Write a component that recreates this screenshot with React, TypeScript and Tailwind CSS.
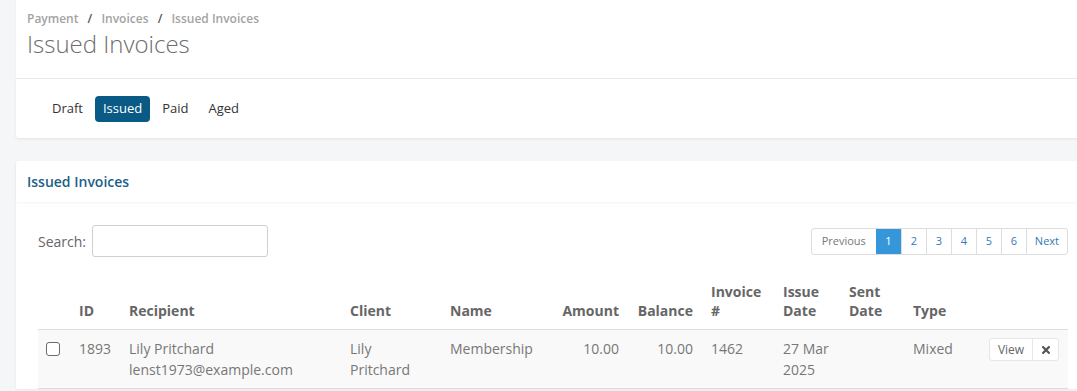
import React from "react";

export default function App() {
  const font = { fontFamily: '"Open Sans", "Noto Sans", sans-serif' };
  return (
    <div className="w-[1077px] h-[391px] overflow-hidden bg-[#f5f6f8]" style={font}>
      <div className="ml-4 w-[1074px]">
        {/* header */}
        <div className="bg-white pl-[11px] pt-[10px] h-[78px] shadow-[0_1px_2px_rgba(0,0,0,0.06)]">
          <div className="text-[12px] leading-[18px] font-semibold text-[#a3a3a3]">
            Payment <span className="mx-[6px] text-[#555]">/</span> Invoices <span className="mx-[6px] text-[#555]">/</span> Issued Invoices
          </div>
          <h1 className="text-[24px] leading-[32px] font-light text-[#6d6d6d]">Issued Invoices</h1>
        </div>
        {/* tabs */}
        <div className="bg-white h-[59px] mt-[1px] rounded-b-[3px] shadow-[0_1px_3px_rgba(0,0,0,0.08)] flex items-center pl-[28px] gap-[4px] text-[13px]">
          <span className="px-[8px] py-[4px] text-[#333]">Draft</span>
          <span className="px-[8px] h-[26px] flex items-center rounded-[4px] bg-[#095a85] text-white">Issued</span>
          <span className="px-[8px] py-[4px] text-[#333]">Paid</span>
          <span className="px-[8px] py-[4px] text-[#333]">Aged</span>
        </div>
        {/* card */}
        <div className="mt-[23px] bg-white rounded-t-[3px] shadow-[0_1px_3px_rgba(0,0,0,0.06)]">
          <div className="h-[41px] pl-[11px] flex items-center text-[14px] font-semibold text-[#1b5f88] shadow-[0_1px_2px_rgba(0,0,0,0.05)]">
            Issued Invoices
          </div>
          <div className="px-[22px] pt-[23px]">
            <div className="flex items-center justify-between h-[32px]">
              <label className="flex items-center text-[14px] text-[#666]">
                Search:
                <input className="ml-[6px] w-[176px] h-[32px] border border-[#cfcfcf] rounded-[3px] bg-white" />
              </label>
              <div className="flex h-[27px] text-[11px] border border-[#ddd] rounded-[3px] overflow-hidden">
                <span className="px-[10px] flex items-center text-[#777]">Previous</span>
                <span className="w-[25px] flex items-center justify-center bg-[#3597d9] text-white">1</span>
                {["2", "3", "4", "5", "6"].map((n) => (
                  <span key={n} className="w-[25px] flex items-center justify-center border-l border-[#ddd] text-[#337ab7]">{n}</span>
                ))}
                <span className="px-[8px] flex items-center border-l border-[#ddd] text-[#337ab7]">Next</span>
              </div>
            </div>
            <table className="mt-[17px] w-[1030px] table-fixed border-collapse text-[14px] leading-[21px]">
              <colgroup>
                <col className="w-[33px]" />
                <col className="w-[50px]" />
                <col className="w-[221px]" />
                <col className="w-[100px]" />
                <col className="w-[103px]" />
                <col className="w-[82px]" />
                <col className="w-[76px]" />
                <col className="w-[72px]" />
                <col className="w-[66px]" />
                <col className="w-[64px]" />
                <col className="w-[76px]" />
                <col className="w-[87px]" />
              </colgroup>
              <thead>
                <tr className="text-[#666] font-bold align-bottom border-b border-[#ddd]">
                  <th className="px-[8px] pt-[8px] pb-[9px]" />
                  <th className="px-[8px] pt-[8px] pb-[9px] text-left font-bold leading-[19px]">ID</th>
                  <th className="px-[8px] pt-[8px] pb-[9px] text-left font-bold leading-[19px]">Recipient</th>
                  <th className="px-[8px] pt-[8px] pb-[9px] text-left font-bold leading-[19px]">Client</th>
                  <th className="px-[8px] pt-[8px] pb-[9px] text-left font-bold leading-[19px]">Name</th>
                  <th className="px-[8px] pt-[8px] pb-[9px] text-right font-bold leading-[19px]">Amount</th>
                  <th className="pl-[8px] pr-[10px] pt-[8px] pb-[9px] text-right font-bold leading-[19px]">Balance</th>
                  <th className="px-[8px] pt-[8px] pb-[9px] text-left font-bold leading-[19px]">Invoice #</th>
                  <th className="px-[8px] pt-[8px] pb-[9px] text-left font-bold leading-[19px]">Issue Date</th>
                  <th className="px-[8px] pt-[8px] pb-[9px] text-left font-bold leading-[19px]">Sent Date</th>
                  <th className="px-[8px] pt-[8px] pb-[9px] text-left font-bold leading-[19px]">Type</th>
                  <th className="px-[8px] pt-[8px] pb-[9px]" />
                </tr>
              </thead>
              <tbody>
                <tr className="bg-[#f9f9f9] text-[#777] align-top border-b border-[#ddd]">
                  <td className="pl-[8px] pr-[8px] pt-[12px] pb-[8px]">
                    <span className="block w-[14px] h-[14px] border border-[#6b6b6b] rounded-[3px] bg-white" />
                  </td>
                  <td className="px-[8px] pt-[8px] pb-[8px]">1893</td>
                  <td className="px-[8px] pt-[8px] pb-[8px]">Lily Pritchard<br />lenst1973@example.com</td>
                  <td className="px-[8px] pt-[8px] pb-[8px]">Lily Pritchard</td>
                  <td className="px-[8px] pt-[8px] pb-[8px]">Membership</td>
                  <td className="px-[8px] pt-[8px] pb-[8px] text-right">10.00</td>
                  <td className="pl-[8px] pr-[10px] pt-[8px] pb-[8px] text-right">10.00</td>
                  <td className="px-[8px] pt-[8px] pb-[8px]">1462</td>
                  <td className="px-[8px] pt-[8px] pb-[8px]">27 Mar 2025</td>
                  <td className="px-[8px] pt-[8px] pb-[8px]"></td>
                  <td className="px-[8px] pt-[8px] pb-[8px]">Mixed</td>
                  <td className="px-[8px] pt-[8px] pb-[8px]">
                    <div className="flex h-[23px] w-[70px] border border-[#e6e6e6] rounded-[3px] bg-white text-[12px] leading-none">
                      <span className="w-[43px] flex items-center justify-center text-[#666] border-r border-[#e6e6e6]">View</span>
                      <span className="flex-1 flex items-center justify-center">
                        <svg width="8" height="8" viewBox="0 0 10 10"><path d="M1.5 1.5L8.5 8.5M8.5 1.5L1.5 8.5" stroke="#555" strokeWidth="2.8" strokeLinecap="square" /></svg>
                      </span>
                    </div>
                  </td>
                </tr>
              </tbody>
            </table>
          </div>
        </div>
      </div>
    </div>
  );
}
